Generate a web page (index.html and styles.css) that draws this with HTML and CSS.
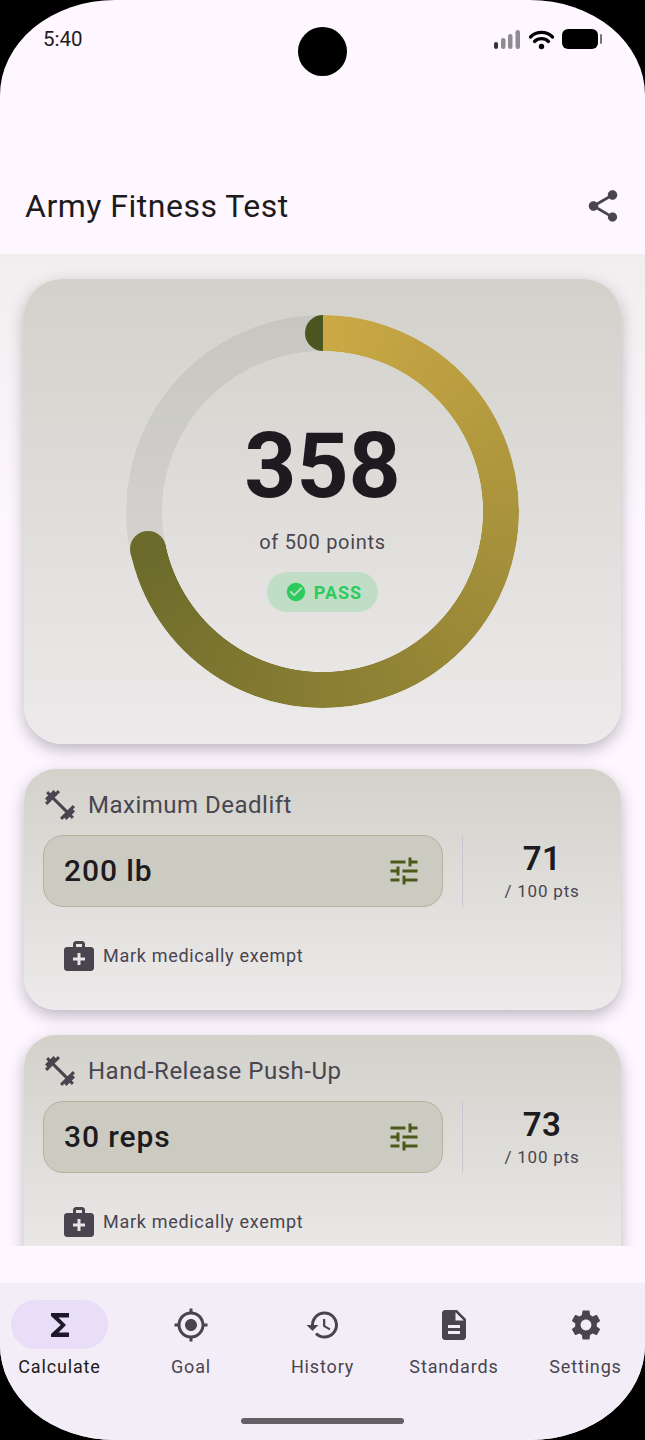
FILE: index.html
```html
<!DOCTYPE html>
<html lang="en">
  <head>
    <meta charset="utf-8" />
    <meta name="viewport" content="width=device-width, initial-scale=1.0" />
    <title>Army Fitness Test</title>
    <link rel="stylesheet" href="styles.css">
  </head>

  <body>
    <div class="screen">
      <header class="top">
        <div class="status-bar">
          <span class="time">5:40</span>
          <div class="camera"></div>
          <svg class="status-icons" width="109" height="23" viewBox="0 0 109 23">
            <rect x="0" y="14" width="4" height="7" rx="2" fill="#333" />
            <rect x="7" y="10" width="4.5" height="11" rx="2.2" fill="#8e8c90" />
            <rect x="14" y="6" width="4.5" height="15" rx="2.2" fill="#8e8c90" />
            <rect x="21.5" y="2" width="4.5" height="19" rx="2.2" fill="#8e8c90" />
            <path d="M36.5 9a15.5 15.5 0 0 1 22 0M40.5 13.5a10 10 0 0 1 14 0" fill="none" stroke="#000" stroke-width="3.2" stroke-linecap="round" />
            <circle cx="47.5" cy="18.5" r="2.7" fill="#000" />
            <rect x="68" y="1" width="36" height="20" rx="6" fill="#000" />
            <rect x="106" y="6" width="2" height="10" rx="1" fill="#77757a" />
          </svg>
        </div>
        <div class="app-bar">
          <h1>Army Fitness Test</h1>
          <svg class="icon share" viewBox="0 0 24 24"><path d="M18 16.08c-.76 0-1.44.3-1.96.77L8.91 12.7c.05-.23.09-.46.09-.7s-.04-.47-.09-.7l7.05-4.11c.54.5 1.25.81 2.04.81 1.66 0 3-1.34 3-3s-1.34-3-3-3-3 1.34-3 3c0 .24.04.47.09.7L8.04 9.81C7.5 9.31 6.79 9 6 9c-1.66 0-3 1.34-3 3s1.34 3 3 3c.79 0 1.5-.31 2.04-.81l7.12 4.16c-.05.21-.08.43-.08.65 0 1.61 1.31 2.92 2.92 2.92s2.92-1.31 2.92-2.92-1.31-2.92-2.92-2.92z"/></svg>
        </div>
      </header>

      <main class="content">
        <section class="card hero">
          <div class="ring">
            <span class="cap cap-start"></span>
            <span class="cap cap-end"></span>
            <div class="total">358</div>
            <div class="total-label">of 500 points</div>
            <div class="pass">
              <svg class="pass-icon" viewBox="0 0 24 24"><path d="M12 2C6.48 2 2 6.48 2 12s4.48 10 10 10 10-4.48 10-10S17.52 2 12 2zm-2 15l-5-5 1.41-1.41L10 14.17l7.59-7.59L19 8l-9 9z"/></svg>
              <span>PASS</span>
            </div>
          </div>
        </section>

        <section class="card metric">
          <div class="metric-title">
            <svg class="icon" viewBox="0 0 24 24"><path d="M20.57 14.86L22 13.43 20.57 12 17 15.57 8.43 7 12 3.43 10.57 2 9.14 3.43 7.71 2 5.57 4.14 4.14 2.71 2.71 4.14l1.43 1.43L2 7.71l1.43 1.43L2 10.57 3.43 12 7 8.43 15.57 17 12 20.57 13.43 22l1.43-1.43L16.29 22l2.14-2.14 1.43 1.43 1.43-1.43-1.43-1.43L22 16.29z"/></svg>
            <span>Maximum Deadlift</span>
          </div>
          <div class="metric-row">
            <div class="value-field">
              <span>200 lb</span>
              <svg class="icon tune" viewBox="0 0 24 24"><path d="M3 17v2h6v-2H3zM3 5v2h10V5H3zm10 16v-2h8v-2h-8v-2h-2v6h2zM7 9v2H3v2h4v2h2V9H7zm14 4v-2H11v2h10zm-6-4h2V7h4V5h-4V3h-2v6z"/></svg>
            </div>
            <div class="divider"></div>
            <div class="score">
              <div class="score-num">71</div>
              <div class="score-of">/ 100 pts</div>
            </div>
          </div>
          <div class="exempt">
            <svg class="icon" viewBox="0 0 24 24"><path d="M20 6h-4V4c0-1.1-.9-2-2-2h-4c-1.1 0-2 .9-2 2v2H4c-1.1 0-2 .9-2 2v12c0 1.1.9 2 2 2h16c1.1 0 2-.9 2-2V8c0-1.1-.9-2-2-2zM10 4h4v2h-4V4zm6 11h-3v3h-2v-3H8v-2h3v-3h2v3h3v2z"/></svg>
            <span>Mark medically exempt</span>
          </div>
        </section>

        <section class="card metric">
          <div class="metric-title">
            <svg class="icon" viewBox="0 0 24 24"><path d="M20.57 14.86L22 13.43 20.57 12 17 15.57 8.43 7 12 3.43 10.57 2 9.14 3.43 7.71 2 5.57 4.14 4.14 2.71 2.71 4.14l1.43 1.43L2 7.71l1.43 1.43L2 10.57 3.43 12 7 8.43 15.57 17 12 20.57 13.43 22l1.43-1.43L16.29 22l2.14-2.14 1.43 1.43 1.43-1.43-1.43-1.43L22 16.29z"/></svg>
            <span>Hand-Release Push-Up</span>
          </div>
          <div class="metric-row">
            <div class="value-field">
              <span>30 reps</span>
              <svg class="icon tune" viewBox="0 0 24 24"><path d="M3 17v2h6v-2H3zM3 5v2h10V5H3zm10 16v-2h8v-2h-8v-2h-2v6h2zM7 9v2H3v2h4v2h2V9H7zm14 4v-2H11v2h10zm-6-4h2V7h4V5h-4V3h-2v6z"/></svg>
            </div>
            <div class="divider"></div>
            <div class="score">
              <div class="score-num">73</div>
              <div class="score-of">/ 100 pts</div>
            </div>
          </div>
          <div class="exempt">
            <svg class="icon" viewBox="0 0 24 24"><path d="M20 6h-4V4c0-1.1-.9-2-2-2h-4c-1.1 0-2 .9-2 2v2H4c-1.1 0-2 .9-2 2v12c0 1.1.9 2 2 2h16c1.1 0 2-.9 2-2V8c0-1.1-.9-2-2-2zM10 4h4v2h-4V4zm6 11h-3v3h-2v-3H8v-2h3v-3h2v3h3v2z"/></svg>
            <span>Mark medically exempt</span>
          </div>
        </section>
      </main>

      <nav class="nav">
        <div class="nav-items">
          <div class="nav-item active">
            <div class="nav-icon"><svg class="icon" viewBox="0 0 24 24"><path d="M18 4H6v2l6.5 6L6 18v2h12v-3h-7l5-5-5-5h7z"/></svg></div>
            <span>Calculate</span>
          </div>
          <div class="nav-item">
            <div class="nav-icon"><svg class="icon" viewBox="0 0 24 24"><path d="M12 8c-2.21 0-4 1.79-4 4s1.79 4 4 4 4-1.79 4-4-1.79-4-4-4zm8.94 3c-.46-4.17-3.77-7.48-7.94-7.94V1h-2v2.06C6.83 3.52 3.52 6.83 3.06 11H1v2h2.06c.46 4.17 3.77 7.48 7.94 7.94V23h2v-2.06c4.17-.46 7.48-3.77 7.94-7.94H23v-2h-2.06zM12 19c-3.87 0-7-3.13-7-7s3.13-7 7-7 7 3.13 7 7-3.13 7-7 7z"/></svg></div>
            <span>Goal</span>
          </div>
          <div class="nav-item">
            <div class="nav-icon"><svg class="icon" viewBox="0 0 24 24"><path d="M13 3c-4.97 0-9 4.03-9 9H1l3.89 3.89.07.14L9 12H6c0-3.87 3.13-7 7-7s7 3.13 7 7-3.13 7-7 7c-1.93 0-3.68-.79-4.94-2.06l-1.42 1.42C8.27 19.99 10.51 21 13 21c4.97 0 9-4.03 9-9s-4.03-9-9-9zm-1 5v5l4.28 2.54.72-1.21-3.5-2.08V8H12z"/></svg></div>
            <span>History</span>
          </div>
          <div class="nav-item">
            <div class="nav-icon"><svg class="icon" viewBox="0 0 24 24"><path d="M14 2H6c-1.1 0-1.99.9-1.99 2L4 20c0 1.1.89 2 1.99 2H18c1.1 0 2-.9 2-2V8l-6-6zm2 16H8v-2h8v2zm0-4H8v-2h8v2zm-3-5V3.5L18.5 9H13z"/></svg></div>
            <span>Standards</span>
          </div>
          <div class="nav-item">
            <div class="nav-icon"><svg class="icon" viewBox="0 0 24 24"><path d="M19.14 12.94c.04-.3.06-.61.06-.94 0-.32-.02-.64-.07-.94l2.03-1.58c.18-.14.23-.41.12-.61l-1.92-3.32c-.12-.22-.37-.29-.59-.22l-2.39.96c-.5-.38-1.03-.7-1.62-.94l-.36-2.54c-.04-.24-.24-.41-.48-.41h-3.84c-.24 0-.43.17-.47.41l-.36 2.54c-.59.24-1.13.57-1.62.94l-2.39-.96c-.22-.08-.47 0-.59.22L2.74 8.87c-.12.21-.08.47.12.61l2.03 1.58c-.05.3-.09.63-.09.94s.02.64.07.94l-2.03 1.58c-.18.14-.23.41-.12.61l1.92 3.32c.12.22.37.29.59.22l2.39-.96c.5.38 1.03.7 1.62.94l.36 2.54c.05.24.24.41.48.41h3.84c.24 0 .44-.17.47-.41l.36-2.54c.59-.24 1.13-.56 1.62-.94l2.39.96c.22.08.47 0 .59-.22l1.92-3.32c.12-.22.07-.47-.12-.61l-2.01-1.58zM12 15.6c-1.98 0-3.6-1.62-3.6-3.6s1.62-3.6 3.6-3.6 3.6 1.62 3.6 3.6-1.62 3.6-3.6 3.6z"/></svg></div>
            <span>Settings</span>
          </div>
        </div>
        <div class="home-bar"></div>
      </nav>
    </div>
  </body>
</html>
```

FILE: styles.css
```css
* {
  box-sizing: border-box;
}

html,
body {
  margin: 0;
  height: 1440px;
  background: #000;
  overflow: hidden;
}

body {
  font-family: Roboto, "Liberation Sans", sans-serif;
  color: #1d1b20;
}

.screen {
  display: flex;
  flex-direction: column;
  width: 645px;
  height: 1440px;
  background: #fef7ff;
  border-radius: 115px / 95px;
  overflow: hidden;
}

.icon {
  display: block;
  width: 36px;
  height: 36px;
  fill: #49454f;
  flex-shrink: 0;
}

/* top */
.top {
  height: 254px;
  flex-shrink: 0;
}

.status-bar {
  display: grid;
  grid-template-columns: 1fr 49px 1fr;
  height: 158px;
  padding: 27px 43px 0;
}

.time {
  font-size: 20.5px;
  line-height: 24px;
  color: #1d1b20;
}

.camera {
  width: 49px;
  height: 49px;
  border-radius: 50%;
  background: #000;
}

.status-icons {
  justify-self: end;
  margin: 1px -1px 0 0;
}

.app-bar {
  display: flex;
  align-items: center;
  justify-content: space-between;
  height: 96px;
  padding: 0 23px 0 25px;
}

.app-bar h1 {
  margin: 0;
  font-size: 32px;
  font-weight: 400;
  letter-spacing: 0.5px;
}

.share {
  width: 38px;
  height: 38px;
}

/* scrolling part */
.content {
  display: flex;
  flex-direction: column;
  gap: 25px;
  height: 992px;
  flex-shrink: 0;
  padding: 25px 24px 0;
  overflow: hidden;
  background: linear-gradient(#f0eeee, #fef7ff 280px);
}

.card {
  flex-shrink: 0;
  background: linear-gradient(#d2d1ca, #edeaeb);
  box-shadow: 0 6px 16px rgba(40, 35, 50, 0.3);
}

.hero {
  display: flex;
  justify-content: center;
  padding: 36px 0;
  border-radius: 38px;
}

.ring {
  position: relative;
  display: flex;
  flex-direction: column;
  align-items: center;
  width: 393px;
  height: 393px;
  padding-top: 106px;
}

.ring::before {
  content: "";
  position: absolute;
  inset: 0;
  border-radius: 50%;
  background: conic-gradient(#cba945 0deg, #6c6b2b 257.8deg, rgba(60, 50, 50, 0.08) 257.8deg 360deg);
  -webkit-mask: radial-gradient(closest-side, transparent 160.2px, #000 160.8px);
  mask: radial-gradient(closest-side, transparent 160.2px, #000 160.8px);
}

.cap {
  position: absolute;
  width: 36px;
  height: 36px;
}

.cap-start {
  top: 0;
  left: 178.5px;
  width: 18px;
  border-radius: 18px 0 0 18px;
  background: #4b5520;
}

.cap-end {
  top: 216px;
  left: 4px;
  border-radius: 50%;
  background: #6c6b2b;
}

.total {
  position: relative;
  font-size: 91px;
  line-height: 90px;
  font-weight: 700;
  color: #1d1b20;
}

.total-label {
  position: relative;
  margin-top: 19px;
  font-size: 20px;
  line-height: 24px;
  font-weight: 450;
  letter-spacing: 0.7px;
  color: #49454f;
}

.pass {
  position: relative;
  display: flex;
  align-items: center;
  gap: 7px;
  margin-top: 18px;
  height: 40px;
  padding: 0 16px 0 18px;
  border-radius: 20px;
  background: #c0dec6;
  color: #2fca5e;
  font-size: 18px;
  font-weight: 700;
  letter-spacing: 1px;
}

.pass-icon {
  width: 22px;
  height: 22px;
  fill: #2fca5e;
}

/* metric cards */
.metric {
  padding: 18px 0 36px 19px;
  border-radius: 32px;
}

.metric-title {
  display: flex;
  align-items: center;
  gap: 10px;
  height: 36px;
  margin-left: -1px;
  font-size: 24px;
  font-weight: 450;
  letter-spacing: 0.5px;
  color: #49454f;
}

.metric-row {
  display: flex;
  margin-top: 12px;
  height: 72px;
}

.value-field {
  display: flex;
  align-items: center;
  justify-content: space-between;
  flex: 1;
  padding: 0 20px 2px 20px;
  border: 1.5px solid #b3b29d;
  border-radius: 20px;
  background: #cccbc1;
  font-size: 30px;
  font-weight: 500;
  letter-spacing: 0.9px;
  color: #1d1b20;
}

.tune {
  fill: #4a5a1a;
  margin-top: 2px;
}

.divider {
  width: 1px;
  margin-left: 19px;
  background: #cac4d0;
}

.score {
  width: 158px;
  text-align: center;
}

.score-num {
  margin-top: 6px;
  font-size: 33px;
  line-height: 36px;
  font-weight: 600;
  letter-spacing: 0.5px;
}

.score-of {
  margin-top: 3px;
  font-size: 17px;
  line-height: 22px;
  font-weight: 450;
  letter-spacing: 0.8px;
  color: #49454f;
}

.exempt {
  display: flex;
  align-items: center;
  gap: 6px;
  margin: 31px 0 0 18px;
  height: 36px;
  padding-bottom: 1px;
  font-size: 18px;
  letter-spacing: 0.7px;
  color: #49454f;
}

.exempt .icon {
  margin-top: 1px;
}

/* bottom navigation */
.nav {
  margin-top: 37px;
  flex: 1;
  background: #f3edf7;
}

.nav-items {
  display: flex;
  justify-content: space-between;
  padding: 17px 11px 0;
}

.nav-item {
  display: flex;
  flex-direction: column;
  align-items: center;
  width: 97px;
  font-size: 18px;
  font-weight: 400;
  letter-spacing: 0.85px;
  color: #49454f;
  white-space: nowrap;
}

.nav-item.active {
  color: #1d1b20;
}

.nav-icon {
  display: flex;
  align-items: center;
  justify-content: center;
  width: 97px;
  height: 49px;
  margin-bottom: 7px;
  border-radius: 25px;
}

.nav-item.active .nav-icon {
  background: #e8def8;
}

.nav-item.active .icon {
  fill: #1d192b;
}

.home-bar {
  width: 163px;
  height: 6px;
  margin: 41px auto 0;
  border-radius: 3px;
  background: #636066;
}
```
